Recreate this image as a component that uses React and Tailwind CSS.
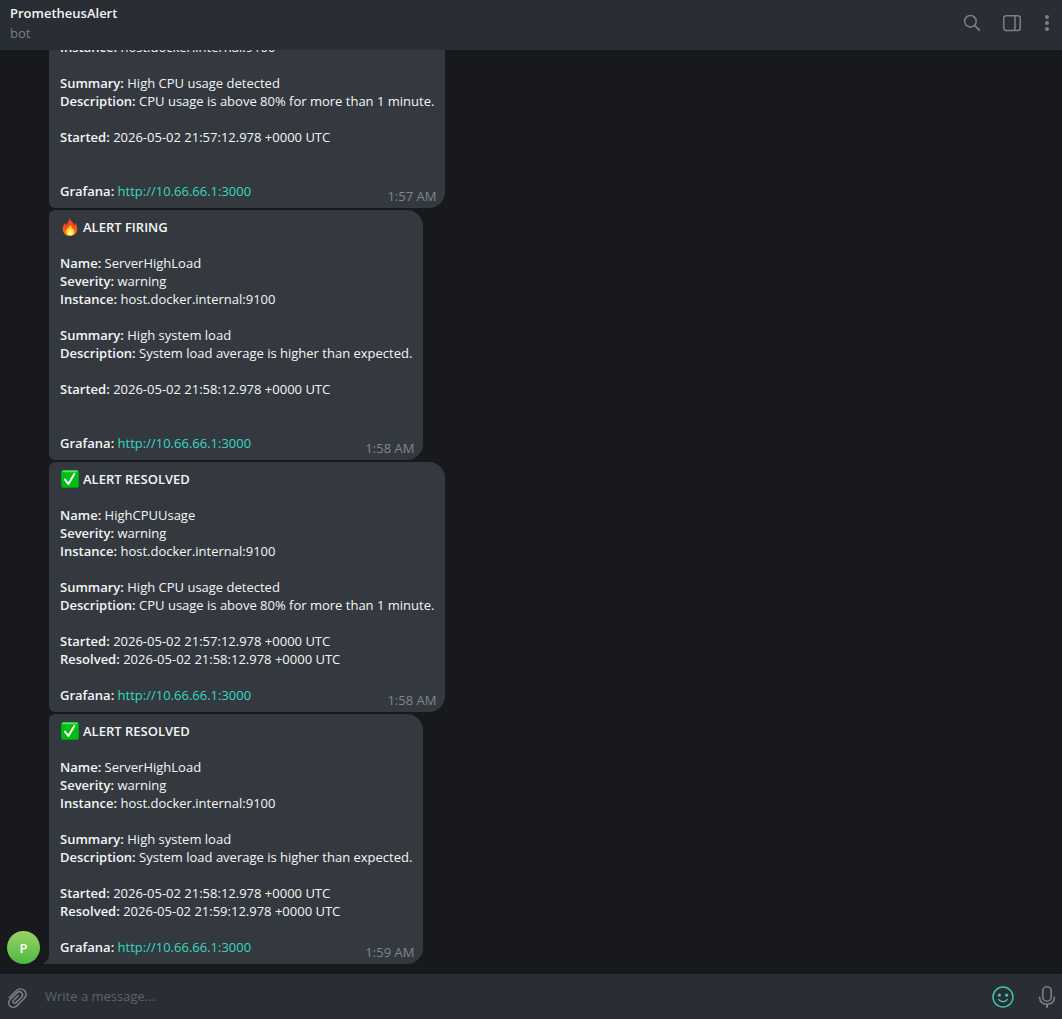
import { useState } from "react";

const cpu = {
  name: "HighCPUUsage",
  summary: "High CPU usage detected",
  description: "CPU usage is above 80% for more than 1 minute.",
};

const load = {
  name: "ServerHighLoad",
  summary: "High system load",
  description: "System load average is higher than expected.",
};

const messages = [
  // scrolled past, only its lower part is on screen
  { id: 1, ...cpu, started: "2026-05-02 21:57:12.978 +0000 UTC", time: "1:57 AM", scrolled: true },
  { id: 2, ...load, started: "2026-05-02 21:58:12.978 +0000 UTC", time: "1:58 AM" },
  {
    id: 3,
    ...cpu,
    started: "2026-05-02 21:57:12.978 +0000 UTC",
    resolved: "2026-05-02 21:58:12.978 +0000 UTC",
    time: "1:58 AM",
  },
  {
    id: 4,
    ...load,
    started: "2026-05-02 21:58:12.978 +0000 UTC",
    resolved: "2026-05-02 21:59:12.978 +0000 UTC",
    time: "1:59 AM",
  },
];

function FireIcon() {
  return (
    <svg width="19" height="18" viewBox="0 0 19 18" aria-hidden="true">
      <defs>
        <linearGradient id="flame" x1="0" y1="0" x2="0" y2="1">
          <stop offset="0" stopColor="#e8481c" />
          <stop offset="0.55" stopColor="#f4511e" />
          <stop offset="1" stopColor="#ff9800" />
        </linearGradient>
        <radialGradient id="core" cx="0.5" cy="0.85" r="0.75">
          <stop offset="0" stopColor="#fffbd0" />
          <stop offset="0.45" stopColor="#ffe94f" />
          <stop offset="1" stopColor="#ff9d1c" />
        </radialGradient>
      </defs>
      <path
        d="M9.6 0.2C9.4 2.8 7 4.4 6.4 7.4C5.6 6.9 5.2 5.6 5.3 4.4C3.6 6.2 2.7 8.9 2.8 11.4C3 15.2 6 17.8 10 17.8C14 17.8 17.1 15.1 17.2 11.2C17.3 8.4 16.3 7 15.7 5C14.9 5.7 14.6 6.6 14.6 7.6C13.8 4.6 11 3.6 9.6 0.2Z"
        fill="url(#flame)"
      />
      <path
        d="M10.2 6.4C10.3 8.8 6.2 10 6.2 13.4C6.2 16 7.9 17.5 10.1 17.5C12.6 17.5 14.3 15.8 14.2 13.4C14.1 12 13.5 11.2 13.3 10C12.7 10.4 12.4 11 12.2 11.7C12.4 9.4 11.8 7.6 10.2 6.4Z"
        fill="url(#core)"
      />
    </svg>
  );
}

function CheckIcon() {
  return (
    <svg width="19" height="18" viewBox="0 0 19 18" aria-hidden="true">
      <rect x="1" y="0" width="18" height="18" rx="2" fill="#008f1c" />
      <rect x="1.5" y="0.3" width="17" height="16.9" rx="2" fill="#00bd12" />
      <rect x="2.5" y="0.6" width="15" height="1.6" rx="0.8" fill="#5fe06a" />
      <path
        d="M5 9.6L8.4 14L14.3 3.9"
        fill="none"
        stroke="#fff"
        strokeWidth="2"
        strokeLinecap="round"
        strokeLinejoin="round"
      />
    </svg>
  );
}

function Field({ label, children }) {
  return (
    <p>
      <strong className="font-semibold">{label}:</strong> {children}
    </p>
  );
}

function Message({ message, last }) {
  return (
    <article
      className={`relative w-fit rounded-l-md rounded-r-2xl bg-[#33393f] px-[11px] py-2 ${
        last ? "rounded-bl-none" : ""
      }`}
    >
      {!message.scrolled && (
        <h2 className="mb-[18px] flex gap-1 font-semibold">
          {message.resolved ? <CheckIcon /> : <FireIcon />}
          {message.resolved ? "ALERT RESOLVED" : "ALERT FIRING"}
        </h2>
      )}
      <div>
        {!message.scrolled && (
          <>
            <Field label="Name">{message.name}</Field>
            <Field label="Severity">warning</Field>
          </>
        )}
        <Field label="Instance">host.docker.internal:9100</Field>
      </div>
      <div className="mt-[18px]">
        <Field label="Summary">{message.summary}</Field>
        <Field label="Description">{message.description}</Field>
      </div>
      <div className="mt-[18px] min-h-9">
        <Field label="Started">{message.started}</Field>
        {message.resolved && <Field label="Resolved">{message.resolved}</Field>}
      </div>
      <div className="mt-[18px] flex items-start justify-between">
        <Field label="Grafana">
          <a href="http://10.66.66.1:3000" className="text-[#37d8c0]">
            http://10.66.66.1:3000
          </a>
        </Field>
        <time className="-mr-0.5 -mb-2 pt-[5px] text-[#7f868d]">{message.time}</time>
      </div>
      {/* tail pointing at the avatar */}
      {last && (
        <svg
          width="6"
          height="10"
          viewBox="0 0 6 10"
          className="absolute bottom-0 -left-1.5"
          aria-hidden="true"
        >
          <path d="M6 0C5.9 4.6 4 8 0.4 9.4C0 9.6 0 10 0.6 10H6Z" fill="#33393f" />
        </svg>
      )}
    </article>
  );
}

export default function App() {
  const [draft, setDraft] = useState("");

  return (
    <div className="flex h-screen flex-col bg-[#18191d] text-[13px] leading-[18px] text-[#f5f5f5] [font-family:'Open_Sans',sans-serif]">
      <header className="z-10 flex h-[50px] shrink-0 items-start justify-between bg-[#282e33] pl-2.5">
        <div className="flex flex-col gap-0.5 pt-1">
          <h1 className="font-semibold">PrometheusAlert</h1>
          <p className="text-[#7c8084]">bot</p>
        </div>
        <div className="flex h-[46px] items-center gap-5 pr-2.5 text-[#7c7f83]">
          <button type="button" aria-label="Search">
            <svg width="20" height="20" viewBox="0 0 20 20" fill="none" stroke="currentColor" strokeWidth="1.5">
              <circle cx="8.4" cy="8.2" r="5.8" />
              <path d="M12.6 12.4L17.8 17.6" strokeWidth="1.8" />
            </svg>
          </button>
          <button type="button" aria-label="Toggle info panel">
            <svg width="20" height="20" viewBox="0 0 20 20" fill="none" stroke="currentColor" strokeWidth="1.5">
              <rect x="1.8" y="2.8" width="16.4" height="14.8" rx="2.5" />
              <path d="M13 2.8V17.6" />
            </svg>
          </button>
          <button type="button" aria-label="More">
            <svg width="10" height="20" viewBox="0 0 10 20" fill="currentColor">
              <circle cx="5" cy="4" r="2" />
              <circle cx="5" cy="10" r="2" />
              <circle cx="5" cy="16" r="2" />
            </svg>
          </button>
        </div>
      </header>

      <main className="flex min-h-0 flex-1 items-end gap-[9px] overflow-hidden pb-2.5 pl-[7px]">
        <div className="flex size-[33px] shrink-0 items-center justify-center rounded-full bg-linear-to-b from-[#9ad164] to-[#46ba43] font-semibold text-white">
          P
        </div>
        <div className="flex flex-col gap-0.5">
          {messages.map((message, i) => (
            <Message key={message.id} message={message} last={i === messages.length - 1} />
          ))}
        </div>
      </main>

      <footer className="flex h-[45px] shrink-0 items-center bg-[#282e33] pr-1 pl-1.5 text-[#7c7f83]">
        <button type="button" aria-label="Attach file">
          <svg
            width="24"
            height="24"
            viewBox="0 0 24 24"
            fill="none"
            stroke="currentColor"
            strokeWidth="1.6"
            strokeLinecap="round"
          >
            <path d="M3.2 12.8L9.8 6.2C12.4 3.6 15.8 3.2 18.2 5.4C20.6 7.7 20.6 11 18.2 13.5L11 20.6C9 22.6 6 22.9 4.1 21C2.2 19.1 2.4 16.2 4.4 14.2L11 7.9C12.4 6.6 14.4 6.5 15.6 7.7C16.9 9 16.8 10.8 15.5 12.2L10 17.6C9.2 18.4 8.1 18.5 7.4 17.8C6.7 17.1 6.8 16.1 7.6 15.3L12.2 10.8" />
          </svg>
        </button>
        <input
          type="text"
          aria-label="Message"
          placeholder="Write a message..."
          value={draft}
          onChange={(e) => setDraft(e.target.value)}
          className="ml-[15px] min-w-0 flex-1 bg-transparent pb-0.5 text-[#f5f5f5] outline-none placeholder:text-[#5f6367]"
        />
        <button type="button" aria-label="Emoji" className="text-[#3fc1b0]">
          <svg width="24" height="24" viewBox="0 0 24 24" fill="none" stroke="currentColor" strokeWidth="1.5">
            <circle cx="12" cy="12" r="10" />
            <circle cx="8.4" cy="10.2" r="1.6" fill="currentColor" stroke="none" />
            <circle cx="15.6" cy="10.2" r="1.6" fill="currentColor" stroke="none" />
            <path d="M7.8 14.6C9.8 17.4 14.2 17.4 16.2 14.6" strokeLinecap="round" />
          </svg>
        </button>
        <button type="button" aria-label="Record voice message" className="ml-[21px]">
          <svg
            width="22"
            height="24"
            viewBox="0 0 22 24"
            fill="none"
            stroke="currentColor"
            strokeWidth="1.6"
            strokeLinecap="round"
          >
            <rect x="6.8" y="1.8" width="8.4" height="14.4" rx="4.2" />
            <path d="M3.6 12.2C3.8 16.8 6.8 19.2 11 19.2C15.2 19.2 18.2 16.8 18.4 12.2" />
            <path d="M11 19.4V22" strokeWidth="2" />
          </svg>
        </button>
      </footer>
    </div>
  );
}
